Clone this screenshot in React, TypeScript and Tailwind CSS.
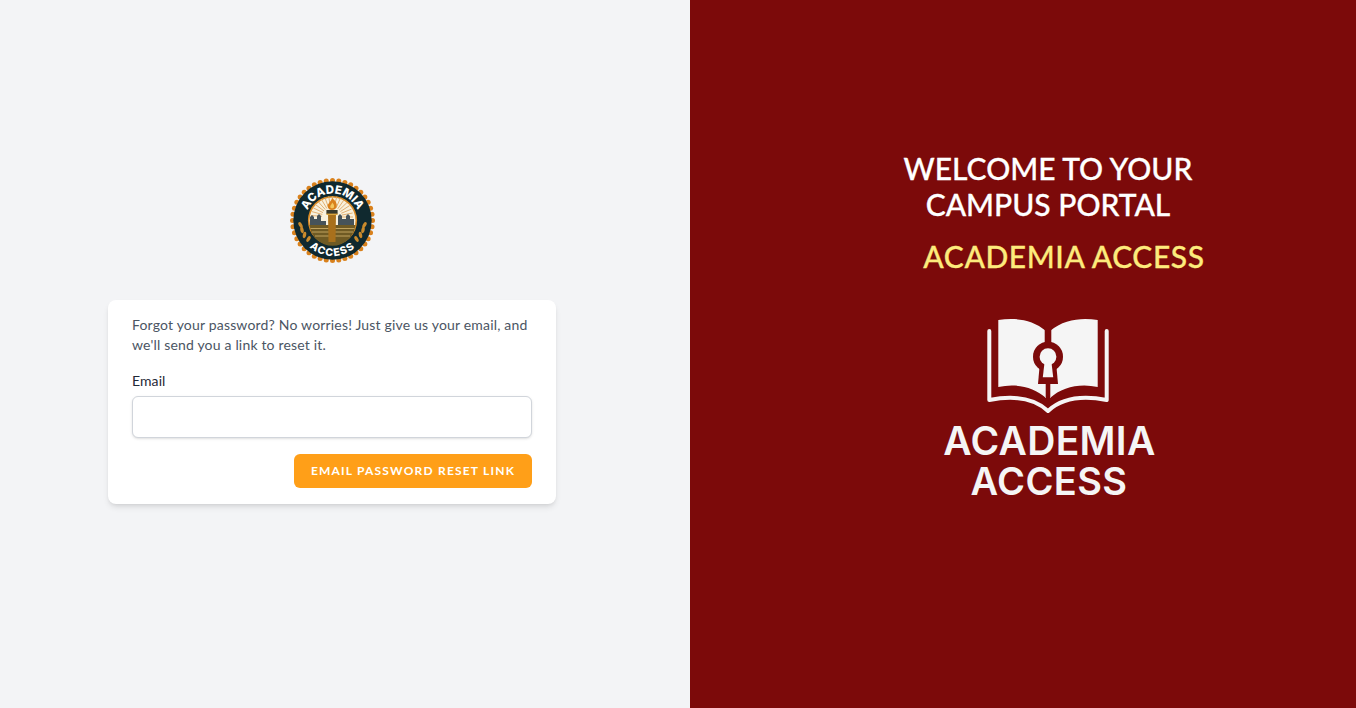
const MAROON = '#7c0a0a';
const PAPER = '#f5f5f5';

function SchoolBadge() {
  const scallops = Array.from({ length: 40 }, (_, i) => {
    const a = (i / 40) * Math.PI * 2;
    return { x: 42.5 + Math.cos(a) * 40, y: 42.5 + Math.sin(a) * 40 };
  });
  const rays = Array.from({ length: 17 }, (_, i) => (-176 + i * 11) * (Math.PI / 180));
  const leaves = [
    [10.5, 47, 60],
    [12, 52, 40],
    [14.5, 57, 20],
    [18.5, 61, 0],
  ];

  return (
    <svg width="85" height="85" viewBox="0 0 85 85" className="block">
      {scallops.map((s, i) => (
        <circle key={i} cx={s.x} cy={s.y} r="2.5" fill="#d9811c" />
      ))}
      <circle cx="42.5" cy="42.5" r="39.2" fill="#10292f" />
      <circle cx="42.5" cy="42.5" r="24.6" fill="#d98a24" />
      <circle cx="42.5" cy="42.5" r="23" fill="#f8f1dd" />
      {rays.map((a, i) => (
        <line
          key={i}
          x1={42 + Math.cos(a) * 10}
          y1={39 + Math.sin(a) * 10}
          x2={42 + Math.cos(a) * 21}
          y2={39 + Math.sin(a) * 21}
          stroke="#dfa865"
          strokeWidth="0.9"
        />
      ))}
      <path d="M20 43 V39 L22 37 L24 39 V41 H27 V38 L29 36 L31 38 V43 H36 V48 H20Z M48 43 V38 L50 36 L52 38 V41 H56 V38 L58 36 L60 38 V41 H64 V48 H48Z" fill="#46535a" />
      <path d="M19.6 47 H65.4 A23 23 0 0 1 19.6 47Z" fill="#6f5a24" />
      <path d="M20.5 50.5 H64.5 M22 54 H63 M25 58 H60" stroke="#c9ac66" strokeWidth="0.9" />
      <path d="M38 35 H46 L45.5 64 H38.5Z" fill="#a8701c" />
      <rect x="36.4" y="32" width="11.2" height="4" fill="#3a3a2c" />
      <rect x="36.4" y="35.6" width="11.2" height="1.4" fill="#dba63f" />
      <path d="M42 20 C46 23 47.6 26 46.5 29 C46 31 44 32 42 32 C39.6 32 37.8 30.6 37.6 28 C37.6 25.4 41 24 42 20Z" fill="#d9811c" />
      <path d="M42.2 24.5 C43.6 26 44.6 27.6 44 29.2 C43.4 30.6 40.8 30.6 40.3 29.2 C39.9 27.6 41.6 26.6 42.2 24.5Z" fill="#f4c65c" />
      {leaves.map(([x, y, r], i) => (
        <g key={i}>
          <ellipse cx={x} cy={y} rx="1.7" ry="3.2" fill="#c98a2c" transform={`rotate(${-r + 30} ${x} ${y})`} />
          <ellipse cx={85 - x} cy={y} rx="1.7" ry="3.2" fill="#c98a2c" transform={`rotate(${r - 30} ${85 - x} ${y})`} />
        </g>
      ))}
      <path id="badge-top" d="M15.5 42.5 A27 27 0 0 1 69.5 42.5" fill="none" />
      <path id="badge-bottom" d="M8.5 44 A34 34 0 0 0 76.5 44" fill="none" />
      <text fill="#ffffff" fontSize="11.5" fontWeight="800" fontFamily="Inter, sans-serif">
        <textPath href="#badge-top" startOffset="50%" textAnchor="middle">
          ACADEMIA
        </textPath>
      </text>
      <text fill="#ffffff" fontSize="10.5" fontWeight="800" fontFamily="Inter, sans-serif" letterSpacing="1.2">
        <textPath href="#badge-bottom" startOffset="50%" textAnchor="middle">
          ACCESS
        </textPath>
      </text>
    </svg>
  );
}

function PortalLogo() {
  return (
    <svg width="240" height="195" viewBox="0 0 240 195" className="block">
      <g transform="translate(58 0)">
        <path d="M12.3 3 C28 0.5 46 2 60 14 V81 C48 70 30 66 12.3 70Z" fill={PAPER} />
        <path d="M111.7 3 C96 0.5 78 2 64 14 V81 C76 70 94 66 111.7 70Z" fill={PAPER} />
        <path
          d="M3.3 14 V83 C24 79 47 80 62 94 C77 80 100 79 120.7 83 V14"
          fill="none"
          stroke={PAPER}
          strokeWidth="4"
          strokeLinecap="round"
          strokeLinejoin="round"
        />
        <rect x="58.7" y="8" width="6.6" height="22" fill={MAROON} />
        <rect x="59.7" y="66" width="4.6" height="14" fill={MAROON} />
        <circle cx="62" cy="39.7" r="15" fill={MAROON} />
        <path d="M53.7 48 H70.3 L72 67 H52Z" fill={MAROON} />
        <circle cx="62" cy="39.7" r="8.4" fill={PAPER} />
        <path d="M58.7 44 H65.3 L67.2 60.3 H56.8Z" fill={PAPER} />
      </g>
      <text x="121.5" y="138" textAnchor="middle" fill={PAPER} fontSize="39" fontWeight="600" fontFamily="Inter, sans-serif" letterSpacing="0.3">
        ACADEMIA
      </text>
      <text x="121" y="178" textAnchor="middle" fill={PAPER} fontSize="38" fontWeight="600" fontFamily="Inter, sans-serif" letterSpacing="0.4">
        ACCESS
      </text>
    </svg>
  );
}

export default function App() {
  return (
    <div className="flex h-[708px] w-full font-['Lato','Inter',sans-serif]">
      <div className="flex w-[690px] flex-col items-center justify-center bg-[#f3f4f6] pb-[26px] pr-[26px]">
        <SchoolBadge />
        <div className="mt-[37px] w-[448px] rounded-lg bg-white px-6 pt-[15px] pb-4 shadow-md">
          <p className="text-[14px] leading-5 tracking-[0.18px] text-[#4b5563]">
            Forgot your password? No worries! Just give us your email, and we'll send you a link to reset it.
          </p>
          <form className="mt-4">
            <label htmlFor="email" className="block text-[14px] leading-5 font-normal tracking-[0.1px] text-[#1f2937]">
              Email
            </label>
            <input
              id="email"
              type="email"
              className="mt-[5px] block h-[42px] w-full rounded-md border border-[#d1d5db] bg-white px-3 shadow-sm"
            />
            <div className="mt-4 flex justify-end">
              <button
                type="button"
                className="h-[34px] w-[238px] rounded-md bg-[#ff9f18] text-[12px] font-bold tracking-widest text-white uppercase"
              >
                Email Password Reset Link
              </button>
            </div>
          </form>
        </div>
      </div>
      <div className="flex flex-1 flex-col items-center bg-[#7c0a0a] pt-[150px] pl-[50px]">
        <h1 className="w-[320px] text-center text-[30px] leading-9 font-medium text-white uppercase [-webkit-text-stroke:0.3px_#ffffff]">
          Welcome to your campus portal
        </h1>
        <h2 className="mt-4 ml-[32px] text-[30px] leading-9 font-medium tracking-[0.6px] text-[#fdeb7c] uppercase [-webkit-text-stroke:0.3px_#fdeb7c]">
          Academia Access
        </h2>
        <div className="mt-[43px]">
          <PortalLogo />
        </div>
      </div>
    </div>
  );
}
